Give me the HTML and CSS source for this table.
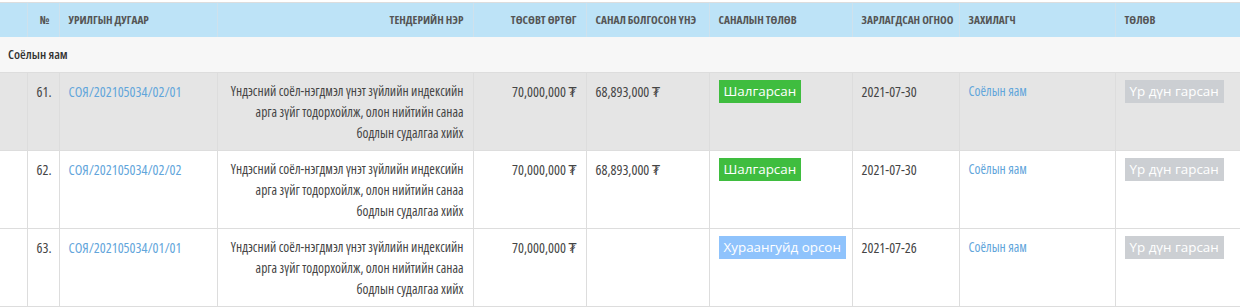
FILE: index.html
```html
<!DOCTYPE html>
<html lang="mn">
<head>
<meta charset="utf-8">
<link rel="stylesheet" href="styles.css">
</head>
<body>
<div class="wrap">
<table class="tbl">
  <colgroup>
    <col class="c0"><col class="c1"><col class="c2"><col class="c3"><col class="c4"><col class="c5"><col class="c6"><col class="c7"><col class="c8"><col class="c9">
  </colgroup>
  <thead>
    <tr>
      <th></th>
      <th class="r">№</th>
      <th>Урилгын дугаар</th>
      <th class="r">Тендерийн нэр</th>
      <th class="r">Төсөвт өртөг</th>
      <th>Санал болгосон үнэ</th>
      <th>Саналын төлөв</th>
      <th>Зарлагдсан огноо</th>
      <th>Захилагч</th>
      <th>Төлөв</th>
    </tr>
  </thead>
  <tbody>
    <tr class="group"><td colspan="10">Соёлын яам</td></tr>
    <tr class="hover">
      <td></td>
      <td class="r num">61.</td>
      <td class="num"><a href="#">СОЯ/202105034/02/01</a></td>
      <td class="r">Үндэсний соёл-нэгдмэл үнэт зүйлийн индексийн арга зүйг тодорхойлж, олон нийтийн санаа бодлын судалгаа хийх</td>
      <td class="r num">70,000,000 ₮</td>
      <td class="num">68,893,000 ₮</td>
      <td><span class="badge green">Шалгарсан</span></td>
      <td class="num">2021-07-30</td>
      <td><a href="#">Соёлын яам</a></td>
      <td><span class="badge grey">Үр дүн гарсан</span></td>
    </tr>
    <tr>
      <td></td>
      <td class="r num">62.</td>
      <td class="num"><a href="#">СОЯ/202105034/02/02</a></td>
      <td class="r">Үндэсний соёл-нэгдмэл үнэт зүйлийн индексийн арга зүйг тодорхойлж, олон нийтийн санаа бодлын судалгаа хийх</td>
      <td class="r num">70,000,000 ₮</td>
      <td class="num">68,893,000 ₮</td>
      <td><span class="badge green">Шалгарсан</span></td>
      <td class="num">2021-07-30</td>
      <td><a href="#">Соёлын яам</a></td>
      <td><span class="badge grey">Үр дүн гарсан</span></td>
    </tr>
    <tr>
      <td></td>
      <td class="r num">63.</td>
      <td class="num"><a href="#">СОЯ/202105034/01/01</a></td>
      <td class="r">Үндэсний соёл-нэгдмэл үнэт зүйлийн индексийн арга зүйг тодорхойлж, олон нийтийн санаа бодлын судалгаа хийх</td>
      <td class="r num">70,000,000 ₮</td>
      <td></td>
      <td><span class="badge blue">Хураангуйд орсон</span></td>
      <td class="num">2021-07-26</td>
      <td><a href="#">Соёлын яам</a></td>
      <td><span class="badge grey">Үр дүн гарсан</span></td>
    </tr>
  </tbody>
</table>
</div>
</body>
</html>
```
FILE: styles.css
```css
html, body {
  margin: 0;
  padding: 0;
  background: #ffffff;
}
.wrap {
  padding-top: 2px;
}
.tbl {
  width: 1240px;
  border-collapse: collapse;
  table-layout: fixed;
  font-family: "Open Sans", "DejaVu Sans", sans-serif;
  font-stretch: 75%;
  font-size: 13.5px;
  color: #444444;
  border-top: 1px solid #dddddd;
}
.c0 { width: 27px; }
.c1 { width: 32px; }
.c2 { width: 158px; }
.c3 { width: 256px; }
.c4 { width: 113px; }
.c5 { width: 123px; }
.c6 { width: 143px; }
.c7 { width: 107px; }
.c8 { width: 156px; }
.c9 { width: 125px; }
.tbl th {
  background: #bde3f7;
  color: #555555;
  font-weight: bold;
  font-size: 11.3px;
  text-transform: uppercase;
  text-align: left;
  height: 34px;
  padding: 0 9px;
  box-sizing: border-box;
  border-left: 1px solid #cfe1ec;
  white-space: nowrap;
}
.tbl th:first-child { border-left: none; }
.tbl th.r, .tbl td.r { text-align: right; }
.tbl td {
  border-left: 1px solid #dddddd;
  border-top: 1px solid #dddddd;
  padding: 8px 9px 6px 9px;
  vertical-align: top;
  line-height: 21px;
  height: 77px;
  box-sizing: border-box;
}
.tbl td.num { font-stretch: 87.5%; font-size: 14px; }
.tbl td:first-child { border-left: none; }
.tbl tr.group td {
  background: #f7f7f7;
  font-weight: 600;
  font-size: 13px;
  height: 36px;
  padding: 7px 8px;
  border-top: none;
  vertical-align: middle;
  color: #333333;
}
.tbl tbody tr:last-child td { border-bottom: 2px solid #dddddd; }
.tbl tr.hover td { background: #e5e5e5; }
.tbl a {
  color: #62a5db;
  text-decoration: none;
}
.badge {
  display: inline-block;
  font-stretch: 100%;
  font-size: 13.4px;
  line-height: 23px;
  padding: 0 5px;
  color: #ffffff;
  white-space: nowrap;
  margin-top: -1px;
}
.green { background: #3fbd3f; }
.grey { background: #cccfd3; }
.blue { background: #8fc3fc; }
```
